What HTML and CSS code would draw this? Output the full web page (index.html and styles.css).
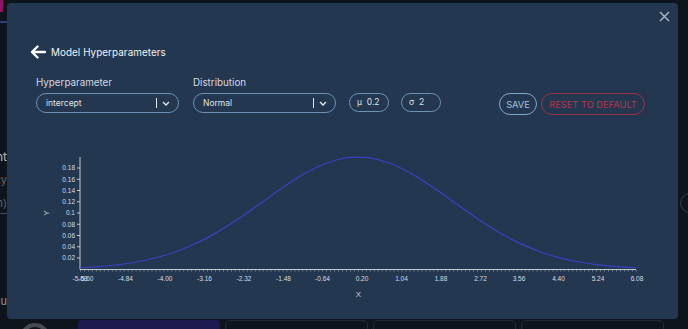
FILE: index.html
```html
<!DOCTYPE html>
<html lang="en">

<head>
    <meta charset="UTF-8">
    <meta name="viewport" content="width=device-width, initial-scale=1.0">
    <title>Model Hyperparameters</title>
    <link rel="stylesheet" href="styles.css">
</head>

<body>
    <!-- page behind the modal -->
    <div class="page">
        <div class="side">
            <div class="mark"></div>
            <div class="side-line"></div>
            <div class="side-row strong">Patient</div>
            <div class="side-row">Frequency</div>
            <div class="side-row boxed">(mean)</div>
            <div class="side-row low">Menu</div>
        </div>
        <div class="cards">
            <div class="avatar"></div>
            <div class="tab"></div>
            <div class="card"></div>
            <div class="card"></div>
            <div class="card"></div>
        </div>
        <div class="ring"></div>
    </div>

    <div class="overlay">
        <section class="modal">
            <button class="close" aria-label="close">
                <svg width="11" height="11" viewBox="0 0 11 11">
                    <path d="M1 1 L10 10 M10 1 L1 10" stroke="#a7b2c0" stroke-width="1.5" fill="none" />
                </svg>
            </button>

            <h1 class="title">
                <svg width="16" height="14" viewBox="0 0 16 14">
                    <path d="M15 7 H2 M7.5 1.5 L2 7 L7.5 12.5" stroke="#fff" stroke-width="2.3" fill="none"
                        stroke-linecap="round" stroke-linejoin="round" />
                </svg>
                Model Hyperparameters
            </h1>

            <div class="controls">
                <div class="field">
                    <label>Hyperparameter</label>
                    <div class="select">
                        <span>intercept</span>
                        <i class="sep"></i>
                        <svg width="8" height="5" viewBox="0 0 8 5">
                            <path d="M1 1 L4 4 L7 1" stroke="#e3e7ec" stroke-width="1.4" fill="none" />
                        </svg>
                    </div>
                </div>
                <div class="field">
                    <label>Distribution</label>
                    <div class="select">
                        <span>Normal</span>
                        <i class="sep"></i>
                        <svg width="8" height="5" viewBox="0 0 8 5">
                            <path d="M1 1 L4 4 L7 1" stroke="#e3e7ec" stroke-width="1.4" fill="none" />
                        </svg>
                    </div>
                </div>
                <div class="pill">μ&nbsp; 0.2</div>
                <div class="pill">σ&nbsp; 2</div>
                <div class="actions">
                    <button class="btn save">SAVE</button>
                    <button class="btn reset">RESET TO DEFAULT</button>
                </div>
            </div>

            <!-- viewBox uses page coordinates -->
            <svg class="chart" width="640" height="170" viewBox="36 140 640 170">
                <defs>
                    <pattern id="ticks" x="80" y="269" width="3.97" height="4" patternUnits="userSpaceOnUse">
                        <rect x="0" y="0" width="0.8" height="2.5" fill="#8d98a6" />
                    </pattern>
                </defs>

                <g class="axis">
                    <line x1="80" y1="157" x2="80" y2="269.5" />
                    <line x1="80" y1="269.5" x2="636" y2="269.5" />
                    <line x1="77" y1="168" x2="80" y2="168" />
                    <line x1="77" y1="179.25" x2="80" y2="179.25" />
                    <line x1="77" y1="190.5" x2="80" y2="190.5" />
                    <line x1="77" y1="201.75" x2="80" y2="201.75" />
                    <line x1="77" y1="213" x2="80" y2="213" />
                    <line x1="77" y1="224.25" x2="80" y2="224.25" />
                    <line x1="77" y1="235.5" x2="80" y2="235.5" />
                    <line x1="77" y1="246.75" x2="80" y2="246.75" />
                    <line x1="77" y1="258" x2="80" y2="258" />
                </g>
                <rect x="80" y="270" width="557" height="3" fill="url(#ticks)" />

                <g class="ylabels">
                    <text x="75" y="170.3">0.18</text>
                    <text x="75" y="181.5">0.16</text>
                    <text x="75" y="192.8">0.14</text>
                    <text x="75" y="204">0.12</text>
                    <text x="75" y="215.3">0.1</text>
                    <text x="75" y="226.5">0.08</text>
                    <text x="75" y="237.8">0.06</text>
                    <text x="75" y="249">0.04</text>
                    <text x="75" y="260.3">0.02</text>
                </g>

                <g class="xlabels">
                    <text x="80" y="280.5">-5.68</text>
                    <text x="86" y="280.5">-5.60</text>
                    <text x="125.5" y="280.5">-4.84</text>
                    <text x="165" y="280.5">-4.00</text>
                    <text x="204.5" y="280.5">-3.16</text>
                    <text x="244" y="280.5">-2.32</text>
                    <text x="283.5" y="280.5">-1.48</text>
                    <text x="322.5" y="280.5">-0.64</text>
                    <text x="362" y="280.5">0.20</text>
                    <text x="401.5" y="280.5">1.04</text>
                    <text x="441" y="280.5">1.88</text>
                    <text x="480.5" y="280.5">2.72</text>
                    <text x="519" y="280.5">3.56</text>
                    <text x="558.5" y="280.5">4.40</text>
                    <text x="598" y="280.5">5.24</text>
                    <text x="637" y="280.5">6.08</text>
                </g>

                <text class="axis-name" x="358.5" y="297">X</text>
                <text class="axis-name" x="0" y="0" transform="translate(49 213) rotate(-90)">Y</text>

                <!-- normal pdf, mu 0.2, sigma 2 -->
                <path class="curve" d="M80,267.76 C86.6,267.4 93.2,267 99.86,266.55 S113,265.3 119.72,264.56
                    S133,262.6 139.57,261.47 S152.8,258.6 159.43,256.88 S172.7,252.8 179.29,250.44
                    S192.5,244.9 199.15,241.89 S212.4,234.9 219.01,231.16 S232.2,222.9 238.86,218.52
                    S252.1,209.2 258.72,204.59 S272,195.1 278.58,190.40 S291.8,181.4 298.44,177.24
                    S311.7,169.6 318.30,166.52 S331.5,161.3 338.15,159.49 S351.4,157.05 358.01,157.05
                    S371.3,157.7 377.87,159.49 S391.1,163.4 397.73,166.52 S411,173.1 417.59,177.24
                    S430.9,185.9 437.45,190.40 S450.7,199.9 457.30,204.59 S470.6,213.9 477.16,218.52
                    S490.4,227.2 497.02,231.16 S510.3,238.6 516.88,241.89 S530.1,247.8 536.73,250.44
                    S550,255.2 556.59,256.88 S569.8,260.3 576.45,261.47 S589.7,263.8 596.31,264.56
                    S609.5,266.1 616.17,266.55 S629.4,267.4 636.02,267.76" />
            </svg>
        </section>
    </div>
</body>

</html>
```

FILE: styles.css
```css
* {
    box-sizing: border-box;
}

body {
    margin: 0;
    width: 688px;
    height: 329px;
    overflow: hidden;
    background: #10171f;
    font-family: Inter, "Open Sans", sans-serif;
    position: relative;
}

/* page behind */
.page {
    height: 329px;
    display: flex;
    flex-flow: column;
    overflow: hidden;
}

.side {
    width: 7px;
    height: 320px;
    flex-shrink: 0;
    display: flex;
    flex-flow: column;
    overflow: hidden;
}

.side > div {
    flex-shrink: 0;
}

.mark {
    width: 3px;
    height: 12px;
    background: #c0177d;
}

.side-line {
    width: 7px;
    height: 2px;
    margin-top: 9px;
    background: #3b4f9a;
}

.side-row {
    display: flex;
    justify-content: flex-end;
    white-space: nowrap;
    font-size: 11px;
    line-height: 14px;
    color: #7d8794;
    margin-top: 9px;
}

.side-row.strong {
    color: #e6e9ed;
    margin-top: 127px;
    font-size: 12px;
}

.side-row.boxed {
    border-bottom: 1px solid #4b6a8c;
    padding-bottom: 3px;
}

.side-row.low {
    margin-top: 80px;
    color: #b9c0c8;
}

.cards {
    display: flex;
    gap: 5px;
    padding-left: 20px;
    align-items: flex-start;
    flex-shrink: 0;
    height: 9px;
    overflow: hidden;
}

.avatar {
    width: 30px;
    height: 30px;
    flex-shrink: 0;
    border: 4px solid #5d6167;
    border-radius: 50%;
    margin-top: 3px;
    margin-right: 23px;
}

.tab {
    width: 142px;
    height: 12px;
    background: #241f64;
    border-radius: 4px 4px 0 0;
}

.card {
    width: 143px;
    height: 12px;
    border: 1px solid #2b3540;
    border-radius: 5px 5px 0 0;
}

.ring {
    position: absolute;
    left: 680px;
    top: 193px;
    width: 20px;
    height: 20px;
    border: 1px solid #3e5066;
    border-radius: 50%;
}

/* modal */
.overlay {
    position: absolute;
    inset: 0;
    background: rgba(8, 12, 16, 0.25);
}

.modal {
    position: absolute;
    left: 7px;
    top: 3px;
    width: 671px;
    height: 316px;
    background: #243750;
    border-radius: 4px;
    padding: 40px 0 0 23px;
}

.close {
    position: absolute;
    top: 8px;
    right: 8px;
    background: none;
    border: 0;
    padding: 0;
    width: 11px;
    height: 11px;
    display: flex;
}

.title {
    margin: 0;
    height: 18px;
    display: flex;
    align-items: center;
    gap: 5px;
    font-size: 9.8px;
    font-weight: 400;
    color: #f1f3f6;
    letter-spacing: 0.1px;
}

.controls {
    display: flex;
    align-items: flex-end;
    margin-top: 15px;
    padding-left: 6px;
}

.field {
    display: flex;
    flex-flow: column;
    margin-right: 14px;
}

.field:nth-child(2) {
    margin-right: 13px;
}

label {
    font-size: 9.8px;
    line-height: 14px;
    color: #d3d9e0;
    margin-bottom: 3px;
}

.select {
    width: 143px;
    height: 20px;
    border: 1px solid #6c93b6;
    border-radius: 10px;
    display: flex;
    align-items: center;
    padding: 0 8px 0 9px;
    font-size: 8.5px;
    color: #dde2e8;
}

.select span {
    flex: 1;
}

.sep {
    width: 1.5px;
    height: 10px;
    background: #e3e7ec;
    margin-right: 5px;
}

.pill {
    width: 40px;
    height: 19px;
    border: 1px solid #6c93b6;
    border-radius: 10px;
    margin-bottom: 1px;
    margin-right: 12px;
    padding-left: 7px;
    font-size: 8.5px;
    line-height: 17px;
    color: #dde2e8;
}

.actions {
    display: flex;
    gap: 4px;
    margin-left: 46px;
    margin-bottom: -2px;
}

.btn {
    height: 22px;
    border-radius: 11px;
    background: none;
    font-family: Inter, "Open Sans", sans-serif;
    font-size: 9.3px;
    padding: 0;
    white-space: nowrap;
    text-align: center;
}

.save {
    width: 38px;
    border: 1px solid #7ea6ca;
    color: #a6c4de;
}

.reset {
    width: 104px;
    border: 1px solid #9c3349;
    color: #b1384e;
}

.chart {
    display: block;
    margin: 27px 0 0 6px;
}

.axis line {
    stroke: #c3c9d1;
    stroke-width: 1;
}

.ylabels text {
    font-family: "Liberation Sans", sans-serif;
    font-size: 6.5px;
    fill: #d7dce2;
    text-anchor: end;
}

.xlabels text {
    font-family: "Liberation Sans", sans-serif;
    font-size: 6.5px;
    fill: #d7dce2;
    text-anchor: middle;
}

.axis-name {
    font-family: "Liberation Sans", sans-serif;
    font-size: 8px;
    fill: #c8ced6;
    text-anchor: middle;
}

.curve {
    fill: none;
    stroke: #3e3fc4;
    stroke-width: 1.2;
}
```
